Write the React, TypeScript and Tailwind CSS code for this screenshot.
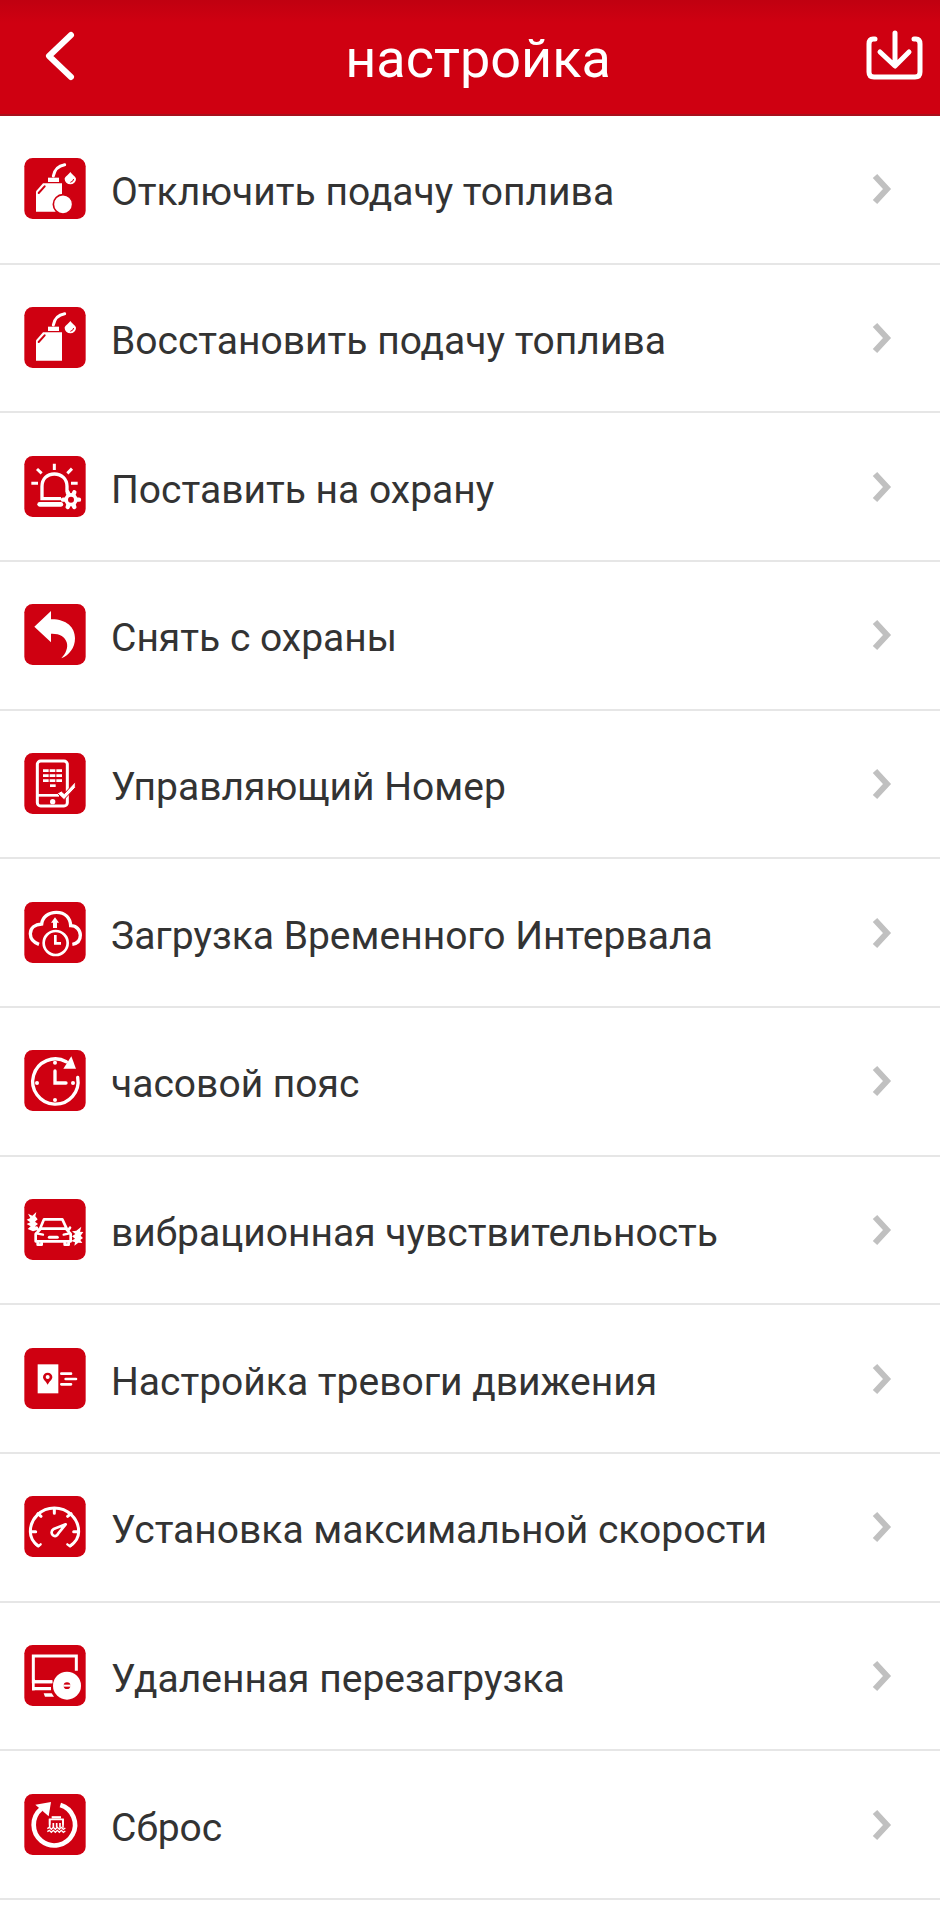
import React from "react";

type Item = {
  label: string;
  icon: React.ReactNode;
};

const RED = "#cf0011";

// every glyph is drawn on a 240 grid, the red tile sits inside it
const Tile = ({ children }: { children: React.ReactNode }) => (
  <svg viewBox="0 0 240 240" className="h-20 w-20 shrink-0" fill="none" aria-hidden="true">
    <rect x="28" y="27" width="184" height="183" rx="25" fill={RED} />
    {children}
  </svg>
);

const Canister = ({ off }: { off?: boolean }) => (
  <Tile>
    <path d="M84 103H141V188H63V127Z" fill="#fff" />
    <path d="M71 132L89 112" stroke={RED} strokeWidth="6" strokeLinecap="round" />
    <rect x="99" y="86" width="33" height="13" fill="#fff" />
    <path d="M115 81Q120 52 149 47" stroke="#fff" strokeWidth="9" strokeLinecap="round" />
    <path d="M166 69C174 80 183 83 183 90A17 16 0 0 1 149 90C149 83 158 80 166 69Z" fill="#fff" />
    <path d="M166 100Q175 98 176 90" stroke={RED} strokeWidth="3" />
    {off ? <circle cx="144" cy="166" r="29" fill="#fff" stroke={RED} strokeWidth="5" /> : null}
  </Tile>
);

const AlarmIcon = () => (
  <Tile>
    <g stroke="#fff" strokeWidth="9">
      <path d="M138 155H81V118C81 96 96 81 118 81S156 96 156 118V134" strokeWidth="10" />
      <path d="M118 50V69M66 66L80 79M171 65L157 79M49 109H69M168 109H188" />
    </g>
    <rect x="67" y="165" width="78" height="14" rx="7" fill="#fff" />
    <circle cx="168" cy="158" r="27" fill={RED} />
    <g stroke="#fff" strokeWidth="13">
      <path d="M158 136L178 180M178 136L158 180M144 158H192" strokeLinecap="round" />
    </g>
    <circle cx="168" cy="158" r="20" fill="#fff" />
    <circle cx="168" cy="158" r="9" fill={RED} />
  </Tile>
);

const UndoIcon = () => (
  <Tile>
    <path
      d="M58 95L108 48V73C153 72 180 96 180 130C180 158 163 181 139 190C153 175 160 158 155 142C150 124 133 115 108 116V142Z"
      fill="#fff"
    />
  </Tile>
);

const PhoneIcon = () => (
  <Tile>
    <rect x="67" y="51" width="90" height="135" rx="10" stroke="#fff" strokeWidth="9" />
    <path d="M67 154H132" stroke="#fff" strokeWidth="8" />
    <path d="M84 80H141M84 95H141M84 110H141" stroke="#fff" strokeWidth="8" strokeDasharray="17 3" />
    <path d="M105 125H122" stroke="#fff" strokeWidth="8" />
    <circle cx="113" cy="173" r="8" fill="#fff" />
    <path d="M127 148L139 141L148 149L181 113V131L147 167Z" fill="#fff" stroke={RED} strokeWidth="3" />
  </Tile>
);

const CloudIcon = () => (
  <Tile>
    <path
      d="M72 154C56 148 46 137 46 122C46 105 60 94 80 93C82 73 100 58 124 58C151 58 166 75 167 98C184 98 196 111 196 127C196 143 187 152 172 154"
      stroke="#fff"
      strokeWidth="10"
    />
    <circle cx="122" cy="150" r="36" stroke="#fff" strokeWidth="8" />
    <path d="M121 126V151H138" stroke="#fff" strokeWidth="8" />
    <path d="M120 73L132 89H126V105H114V89H108Z" fill="#fff" />
  </Tile>
);

const ClockIcon = () => (
  <Tile>
    <path d="M154 62A68 68 0 1 0 188 109" stroke="#fff" strokeWidth="10" strokeLinecap="round" />
    <path d="M169 46L183 83H145Z" fill="#fff" />
    <path d="M120 90V126H153" stroke="#fff" strokeWidth="10" strokeLinecap="round" />
    <g fill="#fff">
      <circle cx="120" cy="65" r="6" />
      <circle cx="66" cy="126" r="6" />
      <circle cx="174" cy="126" r="6" />
      <circle cx="120" cy="177" r="6" />
    </g>
  </Tile>
);

const CarIcon = () => (
  <Tile>
    <g stroke="#fff" strokeWidth="8" strokeLinejoin="round" strokeLinecap="round">
      <path d="M75 116L87 88H142L155 116Z" />
      <path d="M75 119L62 132V154H167V132L155 119" />
      <path d="M68 158V164H80V158M149 158V164H161V158" />
      <path d="M64 130L84 134M164 130L146 134" strokeWidth="7" />
      <path d="M103 142H127" strokeWidth="9" />
      <path d="M69 119L65 113M161 119L165 113" strokeWidth="8" />
    </g>
    <path
      d="M39 71L52 77L64 66L61 79L68 88L60 95L69 102L61 108L67 120L54 124L38 117L47 109L35 102L46 97L35 89L46 84Z"
      fill="#fff"
    />
    <path
      d="M171 124L184 122L199 110L195 125L205 126L197 137L204 144L196 150L202 159L190 158L178 167L180 157L168 153L180 146L171 139L181 132Z"
      fill="#fff"
    />
  </Tile>
);

const MoveIcon = () => (
  <Tile>
    <rect x="68" y="76" width="62" height="87" fill="#fff" />
    <path d="M98 137C92 126 84 122 84 114A14 13 0 0 1 112 114C112 122 104 126 98 137Z" fill={RED} />
    <circle cx="98" cy="114" r="6" fill="#fff" />
    <path d="M139 104H168M152 120H183M139 136H168" stroke="#fff" strokeWidth="8" strokeLinecap="round" />
  </Tile>
);

const GaugeIcon = () => (
  <Tile>
    <g stroke="#fff" strokeWidth="9" strokeLinecap="round" strokeLinejoin="round">
      <path d="M62 172L70 178L77 172M157 172L165 178L173 172" strokeWidth="7" />
      <path d="M69 176C54 165 46 150 46 134C46 94 79 63 118 63S191 94 191 134C191 150 182 165 166 176" />
      <path d="M118 65V79M69 80L78 88M168 80L158 88M48 134H62M176 134H189" />
      <path d="M152 112L116 126C107 131 108 144 118 147C124 148 128 143 130 139Z" strokeWidth="8" />
    </g>
  </Tile>
);

const MonitorIcon = () => (
  <Tile>
    <path d="M184 104V60H55V137H112" stroke="#fff" strokeWidth="9" />
    <path d="M51 133H112V142H51ZM51 153H108V163H51Z" fill="#fff" />
    <path d="M55 129V163" stroke="#fff" strokeWidth="8" />
    <path d="M86 172H110L117 182H90Z" fill="#fff" />
    <circle cx="156" cy="149" r="42" fill="#fff" />
    <circle cx="156" cy="149" r="10" fill={RED} />
    <path d="M145 149H167" stroke="#fff" strokeWidth="6" />
  </Tile>
);

const ResetIcon = () => (
  <Tile>
    <path d="M136 60A62 62 0 1 1 78 72" stroke="#fff" strokeWidth="14" />
    <path d="M61 59L108 51L101 94Z" fill="#fff" />
    <g stroke="#fff">
      <path d="M104 119V103H144V119" strokeWidth="5" />
      <path d="M110 97H138" strokeWidth="7" />
      <path d="M104 102V128M115 114V128M125 114V128M135 114V128M144 102V128" strokeWidth="5" />
      <path d="M97 131L103 127L109 133L115 127L121 133L127 127L133 133L139 127L145 133L151 129" strokeWidth="4" />
      <path d="M97 140L103 136L109 142L115 136L121 142L127 136L133 142L139 136L145 142L151 138" strokeWidth="4" />
    </g>
  </Tile>
);

const items: Item[] = [
  { label: "Отключить подачу топлива", icon: <Canister off /> },
  { label: "Восстановить подачу топлива", icon: <Canister /> },
  { label: "Поставить на охрану", icon: <AlarmIcon /> },
  { label: "Снять с охраны", icon: <UndoIcon /> },
  { label: "Управляющий Номер", icon: <PhoneIcon /> },
  { label: "Загрузка Временного Интервала", icon: <CloudIcon /> },
  { label: "часовой пояс", icon: <ClockIcon /> },
  { label: "вибрационная чувствительность", icon: <CarIcon /> },
  { label: "Настройка тревоги движения", icon: <MoveIcon /> },
  { label: "Установка максимальной скорости", icon: <GaugeIcon /> },
  { label: "Удаленная перезагрузка", icon: <MonitorIcon /> },
  { label: "Сброс", icon: <ResetIcon /> },
];

const Header = () => (
  <header className="flex h-[116px] shrink-0 items-center justify-between border-b-2 border-[#a8101c] bg-linear-to-b from-[#c00010] to-[#cf0011] to-20% pr-4 pl-10">
    <button type="button" aria-label="Назад" className="flex h-16 w-12 items-center">
      <svg viewBox="0 0 40 60" className="h-[60px] w-10" fill="none" aria-hidden="true">
        <path d="M31 8L9 29L31 50" stroke="#fff" strokeWidth="6" strokeLinecap="round" strokeLinejoin="round" />
      </svg>
    </button>
    <h1 className="pt-1 pl-1 text-[54px] leading-none text-white">настройка</h1>
    <button type="button" aria-label="Сохранить" className="flex h-16 items-center">
      <svg viewBox="0 0 60 60" className="h-[60px] w-[60px]" fill="none" aria-hidden="true">
        <g stroke="#fff" strokeWidth="5" strokeLinecap="round" strokeLinejoin="round">
          <path d="M11 12H9Q5 12 5 17V45Q5 50 10 50H51Q56 50 56 45V17Q56 12 52 12H50" />
          <path d="M31 6V38M16 25L31 39L45 25" />
        </g>
      </svg>
    </button>
  </header>
);

const App = () => {
  return (
    <div className="flex min-h-screen flex-col bg-white pb-[19px] font-['Roboto',sans-serif]">
      <Header />
      <ul className="grid flex-1 auto-rows-fr">
        {items.map((item) => (
          <li key={item.label} className="border-b-2 border-[#e6e6e6]">
            <button type="button" className="flex h-full w-full items-center pr-[46px] pl-[15px] text-left">
              {item.icon}
              <span className="flex-1 pt-[6px] pl-4 text-[39px] leading-[48px] text-[#333]">{item.label}</span>
              <svg viewBox="0 0 24 36" className="h-9 w-6 shrink-0" fill="none" aria-hidden="true">
                <path d="M5 5L17 18L5 31" stroke="#c0c0c0" strokeWidth="6" />
              </svg>
            </button>
          </li>
        ))}
      </ul>
    </div>
  );
};

export default App;
